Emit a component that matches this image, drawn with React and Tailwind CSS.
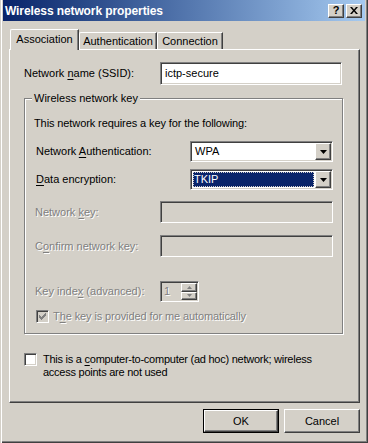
import React from 'react';

const SUNKEN =
  'border border-t-[#808080] border-l-[#808080] border-r-white border-b-white shadow-[inset_1px_1px_0_#404040,inset_-1px_-1px_0_#d4d0c8]';
const RAISED =
  'border border-t-white border-l-white border-r-[#404040] border-b-[#404040] shadow-[inset_-1px_-1px_0_#808080]';
const DISABLED = 'text-[#808080] [text-shadow:1px_1px_0_#fff]';

function U({ children }) {
  return <span className="underline underline-offset-[2px] decoration-[1px]">{children}</span>;
}

function Arrow({ color = '#000' }) {
  return (
    <svg width="7" height="4" viewBox="0 0 7 4">
      <path d="M0 0h7L3.5 4z" fill={color} />
    </svg>
  );
}

function Combo({ value, selected }) {
  return (
    <div className={`w-[143px] h-[21px] bg-white flex items-stretch p-[1px] ${SUNKEN}`}>
      <div className="flex-1 flex items-center p-[1px]">
        {selected ? (
          <div className="w-full h-full bg-[#0a246a] text-white flex items-center pl-[1px] outline outline-1 outline-dotted outline-[#d4d0c8] -outline-offset-1">
            {value}
          </div>
        ) : (
          <span className="pl-[2px]">{value}</span>
        )}
      </div>
      <div className={`w-[16px] bg-[#d4d0c8] flex items-center justify-center ${RAISED}`}>
        <Arrow />
      </div>
    </div>
  );
}

function CheckMark({ color }) {
  return (
    <svg width="7" height="7" viewBox="0 0 7 7">
      <path d="M0 2h1v1h1v1h1V3h1V2h1V1h1V0h1v3H6v1H5v1H4v1H3v1H2V6H1V5H0z" fill={color} />
    </svg>
  );
}

export default function App() {
  return (
    <div className="w-[368px] h-[443px] bg-[#d4d0c8] font-['Liberation_Sans',Arial,sans-serif] text-[11px] leading-[13px] text-black shadow-[inset_1px_0_0_#d4d0c8,inset_2px_0_0_#fff,inset_-1px_-1px_0_#404040,inset_-2px_-2px_0_#808080] flex flex-col overflow-hidden">
      {/* Title bar */}
      <div className="mx-[3px] h-[21px] bg-gradient-to-r from-[#0a246a] to-[#a6caf0] flex items-center justify-between pl-[2px] pr-[3px]">
        <span className="text-white font-bold text-[12px] leading-[14px] tracking-[-0.1px]">Wireless network properties</span>
        <div className="flex gap-[2px]">
          <div className={`w-[16px] h-[14px] bg-[#d4d0c8] flex items-center justify-center font-bold text-[11px] leading-none ${RAISED}`}>
            ?
          </div>
          <div className={`w-[16px] h-[14px] bg-[#d4d0c8] flex items-center justify-center ${RAISED}`}>
            <svg width="8" height="7" viewBox="0 0 8 7">
              <path d="M0 0h2l2 2.5L6 0h2L5 3.5 8 7H6L4 4.5 2 7H0l3-3.5z" fill="#000" />
            </svg>
          </div>
        </div>
      </div>

      {/* Tabs */}
      <div className="h-[28px] flex items-end pl-[10px]">
        <div className="relative z-10 h-[21px] mb-[-1px] w-[69px] bg-[#d4d0c8] border-l border-t border-white border-r border-r-[#404040] shadow-[inset_-1px_0_0_#808080] rounded-tl-[2px] flex items-start justify-center pt-[3px]">
          Association
        </div>
        <div className="h-[17px] w-[78px] border-l border-t border-white border-r border-r-[#404040] shadow-[inset_-1px_0_0_#808080] rounded-tl-[2px] flex items-center justify-center">
          Authentication
        </div>
        <div className="h-[17px] w-[66px] border-l border-t border-white border-r border-r-[#404040] shadow-[inset_-1px_0_0_#808080] rounded-tl-[2px] flex items-center justify-center">
          Connection
        </div>
      </div>

      {/* Panel */}
      <div className={`ml-[9px] w-[351px] h-[354px] flex flex-col ${RAISED}`}>
        <div className="mt-[12px] ml-[14px] flex items-center">
          <div className="w-[136px]">
            Network <U>n</U>ame (SSID):
          </div>
          <div className={`w-[182px] h-[23px] bg-white flex items-center pl-[4px] ${SUNKEN}`}>ictp-secure</div>
        </div>

        {/* Group box */}
        <div className="relative mt-[13px] ml-[14px] w-[319px] h-[236px] border border-[#808080] shadow-[inset_1px_1px_0_#fff,1px_1px_0_#fff] flex flex-col">
          <span className="absolute left-[7px] top-[-7px] bg-[#d4d0c8] px-[2px]">Wireless network key</span>

          <div className="mt-[18px] ml-[9px] tracking-[-0.1px]">This network requires a key for the following:</div>

          <div className="mt-[11px] ml-[11px] flex items-center">
            <div className="w-[154px]">
              Network <U>A</U>uthentication:
            </div>
            <Combo value="WPA" />
          </div>

          <div className="mt-[7px] ml-[11px] flex items-center">
            <div className="w-[154px]">
              <U>D</U>ata encryption:
            </div>
            <Combo value="TKIP" selected />
          </div>

          <div className="mt-[11px] ml-[10px] flex items-center">
            <div className={`w-[125px] ${DISABLED}`}>
              Network <U>k</U>ey:
            </div>
            <div className={`w-[173px] h-[22px] bg-[#d4d0c8] ${SUNKEN}`} />
          </div>

          <div className="mt-[12px] ml-[10px] flex items-center">
            <div className={`w-[125px] ${DISABLED}`}>
              C<U>o</U>nfirm network key:
            </div>
            <div className={`w-[173px] h-[22px] bg-[#d4d0c8] ${SUNKEN}`} />
          </div>

          <div className="mt-[24px] ml-[10px] flex items-center">
            <div className={`w-[125px] ${DISABLED}`}>
              Key inde<U>x</U> (advanced):
            </div>
            <div className={`w-[39px] h-[21px] bg-[#d4d0c8] flex p-[1px] ${SUNKEN}`}>
              <div className={`flex-1 pl-[2px] pt-[2px] ${DISABLED}`}>1</div>
              <div className="w-[16px] flex flex-col">
                <div className={`flex-1 bg-[#d4d0c8] flex items-center justify-center ${RAISED}`}>
                  <svg width="5" height="3" viewBox="0 0 5 3">
                    <path d="M0 3h5L2.5 0z" fill="#808080" />
                  </svg>
                </div>
                <div className={`flex-1 bg-[#d4d0c8] flex items-center justify-center ${RAISED}`}>
                  <svg width="5" height="3" viewBox="0 0 5 3">
                    <path d="M0 0h5L2.5 3z" fill="#808080" />
                  </svg>
                </div>
              </div>
            </div>
          </div>

          <div className="mt-[8px] ml-[11px] flex items-center gap-[4px]">
            <div className={`w-[13px] h-[13px] bg-[#d4d0c8] flex items-center justify-center ${SUNKEN}`}>
              <CheckMark color="#808080" />
            </div>
            <span className={`${DISABLED} tracking-[-0.1px]`}>
              T<U>h</U>e key is provided for me automatically
            </span>
          </div>
        </div>

        <div className="mt-[19px] ml-[14px] flex items-start gap-[6px]">
          <div className={`w-[13px] h-[13px] shrink-0 bg-white ${SUNKEN}`} />
          <div className="tracking-[-0.25px]">
            This is a <U>c</U>omputer-to-computer (ad hoc) network; wireless
            <br />
            access points are not used
          </div>
        </div>
      </div>

      {/* Buttons */}
      <div className="mt-[6px] mr-[8px] flex justify-end gap-[5px]">
        <div className="w-[76px] h-[24px] border border-black">
          <div className={`w-full h-full bg-[#d4d0c8] flex items-center justify-center ${RAISED}`}>OK</div>
        </div>
        <div className={`w-[76px] h-[24px] bg-[#d4d0c8] flex items-center justify-center ${RAISED} shadow-[inset_-1px_-1px_0_#808080,inset_1px_1px_0_#d4d0c8]`}>
          Cancel
        </div>
      </div>
    </div>
  );
}
